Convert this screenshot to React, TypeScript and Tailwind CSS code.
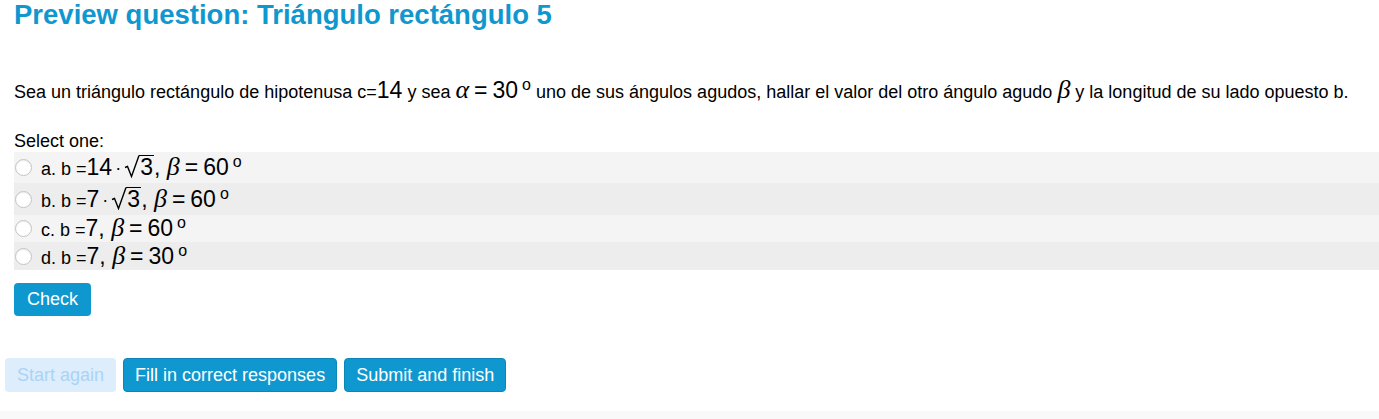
import React from 'react';

const sans = { fontFamily: '"Liberation Sans", Arial, sans-serif' };
const serif = { fontFamily: '"Liberation Serif", "DejaVu Serif", serif' };

function M({ children }: { children: React.ReactNode }) {
  return <span className="text-[23px] leading-none">{children}</span>;
}

function Greek({ children }: { children: React.ReactNode }) {
  return (
    <span className="text-[26px] leading-none italic" style={serif}>
      {children}
    </span>
  );
}

function Eq() {
  return <span className="text-[23px] leading-none mx-[5px]">=</span>;
}

function Deg() {
  return <span className="text-[16px] leading-none relative -top-[8px] ml-[4px]">o</span>;
}

function Dot() {
  return <span className="text-[18px] mx-[3px] relative -top-[1px]">·</span>;
}

function Sqrt3() {
  return (
    <span className="relative inline-block pl-[15px] leading-none">
      <svg className="absolute left-0 -top-[1px]" width="16" height="24" viewBox="0 0 16 24" fill="none" stroke="black" strokeWidth="1.4">
        <path d="M1 13.5 L3.5 12.5 L7.5 22.5 L15 1.5" />
      </svg>
      <span className="inline-block text-[23px] leading-[21px] border-t-[1.5px] border-black pt-[1px] px-[1px]">3</span>
    </span>
  );
}

const options = [
  { key: 'a', content: <>b =<M>14</M><Dot /><Sqrt3 /><M>, </M><Greek>β</Greek><Eq /><M>60</M><Deg /></>, h: 'h-[31px]', bg: 'bg-[#f4f4f4]' },
  { key: 'b', content: <>b =<M>7</M><Dot /><Sqrt3 /><M>, </M><Greek>β</Greek><Eq /><M>60</M><Deg /></>, h: 'h-[32px]', bg: 'bg-[#ededed]' },
  { key: 'c', content: <>b =<M>7, </M><Greek>β</Greek><Eq /><M>60</M><Deg /></>, h: 'h-[27px]', bg: 'bg-[#f4f4f4]' },
  { key: 'd', content: <>b =<M>7, </M><Greek>β</Greek><Eq /><M>30</M><Deg /></>, h: 'h-[28px]', bg: 'bg-[#ededed]' },
];

export default function App() {
  return (
    <div className="w-[1379px] h-[419px] bg-white text-black flex flex-col" style={sans}>
      <h2 className="px-[14px] text-[27.5px] leading-[30px] font-bold text-[#0f98cf]">
        Preview question: Triángulo rectángulo 5
      </h2>

      <p className="px-[14px] mt-[47px] h-[28px] text-[18px] leading-[28px] whitespace-nowrap">
        Sea un triángulo rectángulo de hipotenusa c=<M>14</M> y sea <Greek>α</Greek>
        <Eq /><M>30</M><Deg /> uno de sus ángulos agudos, hallar el valor del otro ángulo agudo <Greek>β</Greek> y la longitud de su lado opuesto b.
      </p>

      <div className="px-[14px] mt-[25px] text-[18px] leading-[22px]">Select one:</div>

      <div className="pl-[14px] flex flex-col">
        {options.map(o => (
          <div key={o.key} className={`flex items-center ${o.h} ${o.bg}`}>
            <span className="w-[17px] h-[17px] rounded-full border border-[#c4c4c4] bg-white shrink-0 ml-[1px] mr-[9px] shadow-[inset_0_1px_1px_rgba(0,0,0,0.08)]" />
            <span className="text-[18px] leading-[24px] whitespace-nowrap">
              {o.key}. {o.content}
            </span>
          </div>
        ))}
      </div>

      <div className="px-[14px] mt-[13px]">
        <button className="h-[33px] px-[13px] rounded-[4px] bg-[#0f98cf] text-white text-[18px]">Check</button>
      </div>

      <div className="pl-[5px] mt-[42px] flex gap-[7px]">
        <button className="h-[34px] px-[12px] rounded-[4px] bg-[#ddedfc] text-[#aad4f5] text-[18px]">Start again</button>
        <button className="h-[34px] px-[11px] rounded-[4px] bg-[#0f98cf] text-white text-[18px] border border-[#0c86b8]">Fill in correct responses</button>
        <button className="h-[34px] px-[11px] rounded-[4px] bg-[#0f98cf] text-white text-[18px] border border-[#0c86b8]">Submit and finish</button>
      </div>

      <div className="mt-auto h-[8px] bg-[#f9f9f9]" />
    </div>
  );
}
